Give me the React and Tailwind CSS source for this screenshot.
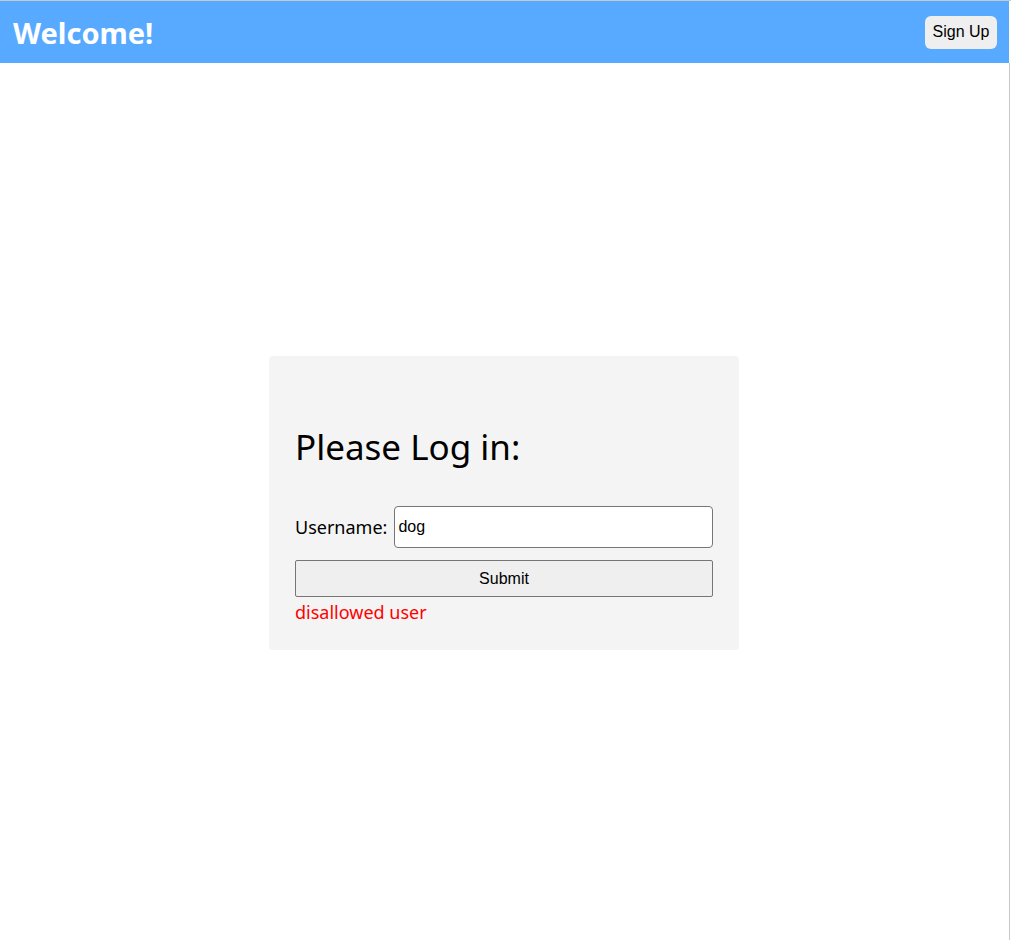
export default function App() {
  return (
    <div className="flex h-[940px] w-[1011px] flex-col border-t border-[#c8c8c8] bg-white" style={{ fontFamily: '"Noto Sans", sans-serif' }}>
      <div className="flex h-[62px] w-[1009px] items-center justify-between bg-[#57aaff] pl-[13px] pr-[12px]">
        <h1 className="text-[29px] font-bold leading-none text-white">Welcome!</h1>
        <button className="h-[33px] w-[72px] rounded-[6px] bg-[#efefef] text-[16px] text-black" style={{ fontFamily: '"Liberation Sans", Arial, sans-serif' }}>
          Sign Up
        </button>
      </div>
      <div className="flex w-[1010px] flex-1 items-center justify-center border-r border-[#c8c8c8] pr-px pt-[3px]">
        <div className="w-[470px] rounded-[4px] bg-[#f4f4f4] px-[26px] pb-[24px] pt-[67px]">
          <h2 className="text-[35px] leading-[48px] text-black">Please Log in:</h2>
          <form className="mt-[35px]" onSubmit={(e) => e.preventDefault()}>
            <div className="flex items-center gap-[7px]">
              <label htmlFor="username" className="text-[18px] text-black">Username:</label>
              <input
                id="username"
                defaultValue="dog"
                className="h-[42px] flex-1 rounded-[4px] border border-[#767676] bg-white px-[3px] text-[16px] text-black"
                style={{ fontFamily: '"Liberation Sans", Arial, sans-serif' }}
              />
            </div>
            <button
              type="submit"
              className="mt-[12px] h-[37px] w-full rounded-[2px] border border-[#767676] bg-[#efefef] text-[16px] text-black"
              style={{ fontFamily: '"Liberation Sans", Arial, sans-serif' }}
            >
              Submit
            </button>
            <p className="mt-[1px] text-[18px] leading-[28px] text-[#ff0000]">disallowed user</p>
          </form>
        </div>
      </div>
    </div>
  )
}
